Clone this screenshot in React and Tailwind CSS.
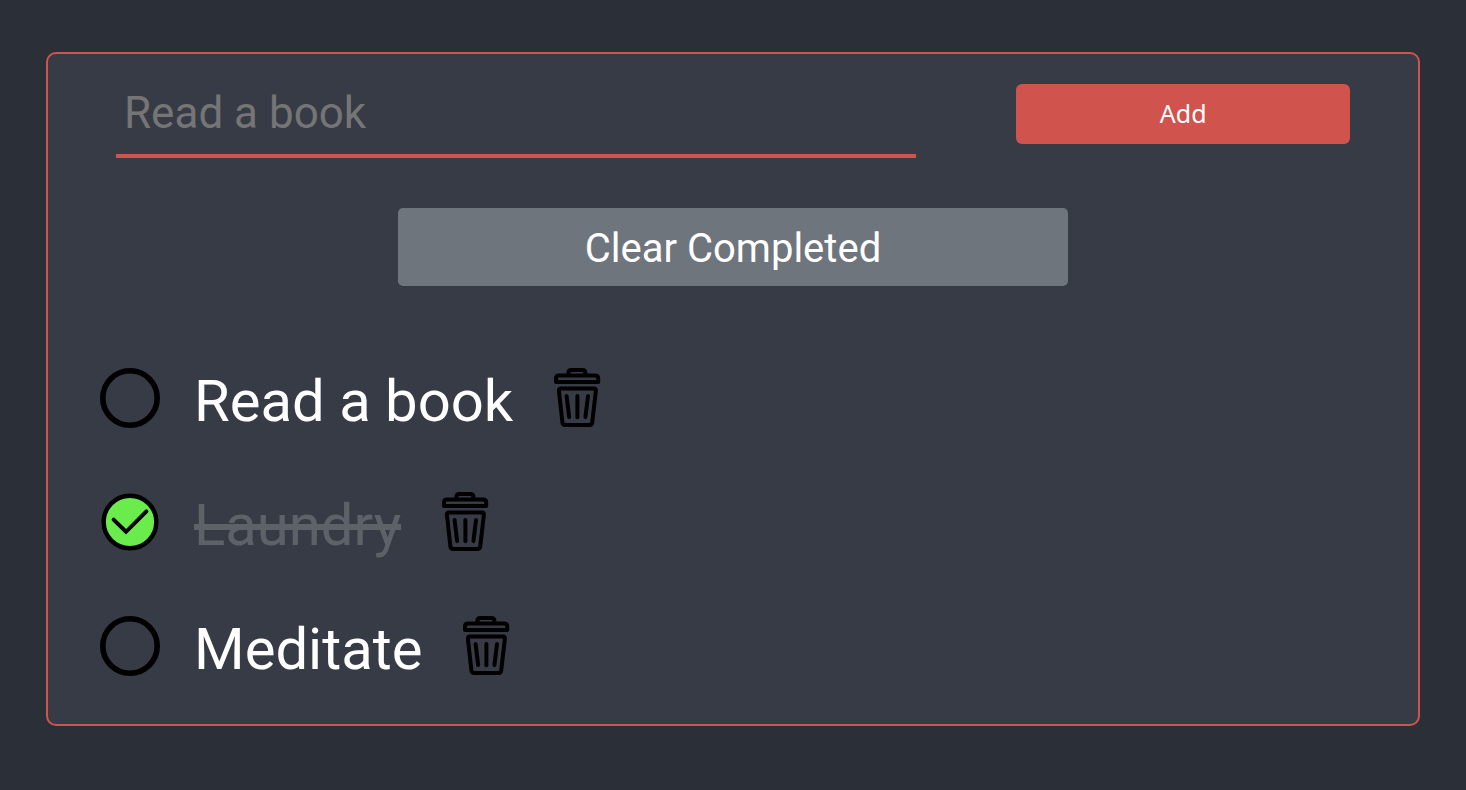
import { useState } from "react";

const initialTodos = [
  { id: 1, name: "Read a book", done: false },
  { id: 2, name: "Laundry", done: true },
  { id: 3, name: "Meditate", done: false },
];

function CircleIcon() {
  return (
    <svg viewBox="0 0 60 60" className="size-[60px]" fill="none" aria-hidden="true">
      <circle cx="30" cy="30" r="27.2" stroke="#000" strokeWidth="5.6" />
    </svg>
  );
}

function CheckedIcon() {
  return (
    <svg viewBox="0 0 60 60" className="size-[60px]" aria-hidden="true">
      <circle cx="30" cy="30" r="26.3" fill="#69ec4c" stroke="#000" strokeWidth="4.4" />
      <path
        d="M13.6 27.6 26 39.8 46.4 19.4"
        fill="none"
        stroke="#000"
        strokeWidth="4"
        strokeLinecap="round"
        strokeLinejoin="miter"
      />
    </svg>
  );
}

function TrashIcon() {
  return (
    <svg
      viewBox="0 0 60 60"
      className="size-[60px]"
      fill="none"
      stroke="#000"
      strokeWidth="4"
      strokeLinecap="round"
      strokeLinejoin="round"
      aria-hidden="true"
    >
      <path d="M21.4 6.4V5Q21.4 2 24.4 2H35.4Q38.4 2 38.4 5V6.4" />
      <path d="M9 14V10.4Q9 7.4 12 7.4H48.2Q51.2 7.4 51.2 10.4V14Z" />
      <path d="M13.8 20.4H47Q49.2 20.4 48.9 22.6L45.2 54.4Q44.8 57 42.2 57H18.4Q15.8 57 15.4 54.4L11.9 22.6Q11.7 20.4 13.8 20.4Z" />
      <path d="M20.8 28V49.2" transform="rotate(-7 20.8 38)" />
      <path d="M30.4 28V49.2" />
      <path d="M39.8 28V49.2" transform="rotate(7 39.8 38)" />
    </svg>
  );
}

function TodoItem({ todo, onToggle, onDelete }) {
  return (
    <li className="flex h-[60px] items-center gap-[34px]">
      <label className="flex cursor-pointer items-center gap-[34px]">
        <input
          type="checkbox"
          className="sr-only"
          checked={todo.done}
          onChange={() => onToggle(todo.id)}
        />
        {todo.done ? <CheckedIcon /> : <CircleIcon />}
        <span
          className={
            todo.done
              ? "pt-1.5 text-[58px] leading-[60px] text-[#5d6168] line-through decoration-[6px]"
              : "pt-1.5 text-[58px] leading-[60px] text-white"
          }
        >
          {todo.name}
        </span>
      </label>
      <button type="button" aria-label={`Delete ${todo.name}`} onClick={() => onDelete(todo.id)}>
        <TrashIcon />
      </button>
    </li>
  );
}

export default function App() {
  const [todos, setTodos] = useState(initialTodos);
  const [name, setName] = useState("");

  const addTodo = (event) => {
    event.preventDefault();
    if (!name.trim()) return;
    setTodos([...todos, { id: Date.now(), name: name.trim(), done: false }]);
    setName("");
  };

  const toggle = (id) =>
    setTodos(todos.map((todo) => (todo.id === id ? { ...todo, done: !todo.done } : todo)));

  return (
    <div className="min-h-screen bg-[#2b2f37] px-[46px] py-[52px] font-['Roboto',sans-serif]">
      <main className="rounded-[10px] border-2 border-[#d0534e] bg-[#373b45] pt-[30px] pb-12">
        <form
          onSubmit={addTodo}
          className="grid grid-cols-[12fr_5fr] items-start gap-[100px] px-[68px]"
        >
          <input
            type="text"
            aria-label="New task"
            placeholder="Read a book"
            value={name}
            onChange={(event) => setName(event.target.value)}
            className="h-[74px] w-full border-b-4 border-[#d0534e] bg-transparent px-2 pb-3 text-[44px] text-white outline-none placeholder:text-[#757575]"
          />
          <button
            type="submit"
            className="h-[60px] rounded-[6px] bg-[#d0534e] font-['Noto_Sans',sans-serif] text-[25px] text-white"
          >
            Add
          </button>
        </form>
        <div className="mt-[50px] flex justify-center px-[15px]">
          <button
            type="button"
            onClick={() => setTodos(todos.filter((todo) => !todo.done))}
            className="h-[78px] w-1/2 rounded-[5px] bg-[#6e757d] pt-1 text-[40px] text-white"
          >
            Clear Completed
          </button>
        </div>
        <ul className="mt-[82px] flex flex-col gap-16 px-[52px]">
          {todos.map((todo) => (
            <TodoItem
              key={todo.id}
              todo={todo}
              onToggle={toggle}
              onDelete={(id) => setTodos(todos.filter((item) => item.id !== id))}
            />
          ))}
        </ul>
      </main>
    </div>
  );
}
